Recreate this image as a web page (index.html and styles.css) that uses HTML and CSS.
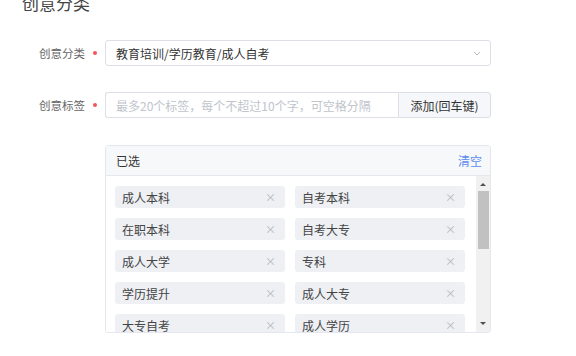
FILE: index.html
```html
<!DOCTYPE html>
<html lang="zh-CN">
<head>
<meta charset="utf-8">
<link rel="stylesheet" href="styles.css">
</head>
<body>
<div class="page">
  <h2 class="title">创意分类</h2>
  <div class="form">
    <div class="row">
      <div class="label">创意分类<span class="dot"></span></div>
      <div class="select">
        <span class="select-text">教育培训/学历教育/成人自考</span>
        <svg class="chev" width="8" height="5" viewBox="0 0 8 5"><path d="M1 1 L4 4 L7 1" fill="none" stroke="#b4b8bf" stroke-width="1"/></svg>
      </div>
    </div>
    <div class="row row-tags">
      <div class="label">创意标签<span class="dot"></span></div>
      <div class="input-group">
        <div class="input"><span class="placeholder">最多20个标签，每个不超过10个字，可空格分隔</span></div>
        <div class="btn">添加(回车键)</div>
      </div>
    </div>
    <div class="panel">
      <div class="panel-head">
        <span class="head-title">已选</span>
        <span class="clear">清空</span>
      </div>
      <div class="panel-body">
        <div class="tags">
          <div class="tag"><span>成人本科</span><span class="x">×</span></div>
          <div class="tag"><span>自考本科</span><span class="x">×</span></div>
          <div class="tag"><span>在职本科</span><span class="x">×</span></div>
          <div class="tag"><span>自考大专</span><span class="x">×</span></div>
          <div class="tag"><span>成人大学</span><span class="x">×</span></div>
          <div class="tag"><span>专科</span><span class="x">×</span></div>
          <div class="tag"><span>学历提升</span><span class="x">×</span></div>
          <div class="tag"><span>成人大专</span><span class="x">×</span></div>
          <div class="tag"><span>大专自考</span><span class="x">×</span></div>
          <div class="tag"><span>成人学历</span><span class="x">×</span></div>
        </div>
        <div class="scrollbar">
          <div class="arrow up"></div>
          <div class="thumb"></div>
          <div class="spacer"></div>
          <div class="arrow down"></div>
        </div>
      </div>
    </div>
  </div>
</div>
</body>
</html>
```
FILE: styles.css
```css
* { box-sizing: border-box; }
html, body { margin: 0; padding: 0; background: #fff; overflow: hidden; }
body {
  font-family: "Noto Sans CJK SC", "Liberation Sans", sans-serif;
  font-size: 12px;
  color: #333;
}
.page { width: 576px; height: 356px; overflow: hidden; }
.title {
  margin: -7px 0 0 22px;
  font-size: 17px;
  line-height: 20px;
  font-weight: normal;
  color: #444;
}
.form { margin-top: 27px; }
.row { display: flex; align-items: center; height: 26px; }
.row-tags { margin-top: 26px; }
.label {
  width: 105px;
  display: flex;
  justify-content: flex-end;
  align-items: center;
  padding-right: 8px;
  color: #666;
  font-size: 11.5px;
}
.dot {
  width: 4px; height: 4px; border-radius: 50%;
  background: #f2565a;
  margin-left: 8px;
}
.select {
  width: 386px; height: 26px;
  border: 1px solid #dcdfe6;
  border-radius: 3px;
  display: flex; align-items: center; justify-content: space-between;
  padding: 0 9px 0 10px;
  color: #333;
}
.chev { margin-right: 0; }
.input-group { display: flex; width: 386px; height: 26px; }
.input {
  flex: 1;
  border: 1px solid #dcdfe6;
  border-right: none;
  border-radius: 3px 0 0 3px;
  display: flex; align-items: center;
  padding-left: 10px;
}
.placeholder { color: #c0c4cc; }
.btn {
  width: 93px;
  border: 1px solid #dcdfe6;
  border-radius: 0 3px 3px 0;
  background: #f5f7fa;
  display: flex; align-items: center; justify-content: center;
  color: #333;
}
.panel {
  margin: 27px 0 0 105px;
  width: 386px;
  border: 1px solid #e4e7ed;
  border-radius: 3px;
}
.panel-head {
  height: 30px;
  background: #f7f8fa;
  border-bottom: 1px solid #e4e7ed;
  display: flex; align-items: center; justify-content: space-between;
  padding: 0 8px 0 10px;
}
.head-title { color: #333; }
.clear { color: #5b8def; }
.panel-body {
  display: flex;
  height: 156px;
  overflow: hidden;
}
.tags {
  flex: 1;
  display: grid;
  grid-template-columns: 170px 170px;
  column-gap: 10px;
  row-gap: 10px;
  align-content: start;
  padding: 10px 0 0 9px;
}
.tag {
  height: 22px;
  background: #eef0f4;
  border-radius: 3px;
  display: flex; align-items: center; justify-content: space-between;
  padding: 0 9px 0 7px;
  color: #444;
}
.x { color: #b3b6bb; font-size: 11px; }
.scrollbar {
  width: 14px;
  background: #f1f1f1;
  display: flex; flex-direction: column; align-items: center;
}
.arrow { width: 0; height: 0; border-left: 3px solid transparent; border-right: 3px solid transparent; }
.up { border-bottom: 3px solid #505050; margin-top: 7px; }
.down { border-top: 3px solid #505050; margin-bottom: 7px; }
.thumb { width: 11px; height: 58px; background: #c1c1c1; margin-top: 5px; }
.spacer { flex: 1; }
```
